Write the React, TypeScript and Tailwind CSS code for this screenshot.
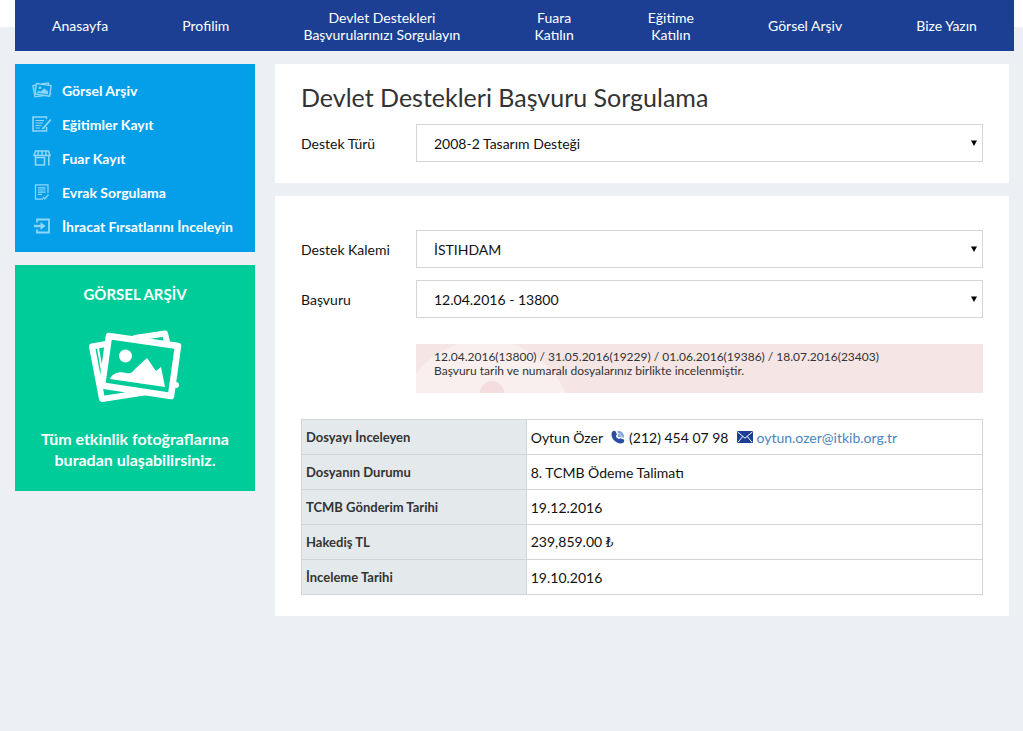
import type { ReactNode } from "react"

const navItems = [
  ["Anasayfa"],
  ["Profilim"],
  ["Devlet Destekleri", "Başvurularınızı Sorgulayın"],
  ["Fuara", "Katılın"],
  ["Eğitime", "Katılın"],
  ["Görsel Arşiv"],
  ["Bize Yazın"],
]

function PhotosIcon({ className }: { className: string }) {
  return (
    <svg viewBox="0 0 94 73" className={className} fill="none" aria-hidden="true">
      {/* back photo */}
      <path
        d="M18 14 L4 16.500 L14 69 L56 62.500 M47 8 L77 3.500 L79 12"
        stroke="currentColor"
        strokeWidth="6"
        strokeLinejoin="round"
        strokeLinecap="round"
      />
      <path d="M10 18 L16 53" stroke="currentColor" strokeWidth="2" />
      <circle cx="88" cy="55" r="3" fill="currentColor" />
      {/* front photo */}
      <path d="M21 6 L90 16 L83 66 L14 55.500 Z" stroke="currentColor" strokeWidth="6.500" strokeLinejoin="round" />
      <circle cx="37.500" cy="26" r="6.500" fill="currentColor" />
      <path
        d="M22 49 C24 43 32 41 38 43 C42 44 44 43 47 39 L59 28 L68 41 L73 37 L77 57 Z"
        fill="currentColor"
      />
    </svg>
  )
}

function FormIcon() {
  return (
    <svg viewBox="0 0 20 16" className="w-5 h-4" fill="none" stroke="currentColor" strokeWidth="1.6" aria-hidden="true">
      <path d="M14.500 3 V1 H1 V15 H14.500 V11" />
      <path d="M3.500 4.500 H12 M3.500 7 H11 M3.500 9.500 H9.500 M3.500 12 H8" strokeWidth="1.2" />
      <path d="M18.800 3.500 L11.500 12 L10 12.800" strokeWidth="1.8" />
    </svg>
  )
}

function StoreIcon() {
  return (
    <svg viewBox="0 0 18 16" className="w-5 h-4" fill="none" stroke="currentColor" strokeWidth="1.6" aria-hidden="true">
      <path d="M2.500 1 H15.500 L17 5.500 H1 Z M5.500 1 L4.800 5.500 M9 1 V5.500 M12.500 1 L13.200 5.500" strokeWidth="1.5" />
      <path d="M2.500 6 V15 H11.500 V7.500 H2.500 M15.800 6 V15.500" />
    </svg>
  )
}

function DocIcon() {
  return (
    <svg viewBox="0 0 20 16" className="w-5 h-4" fill="none" stroke="currentColor" strokeWidth="1.2" aria-hidden="true">
      <path d="M16 9 V0.800 H3.500 V15.200 H11" />
      <path d="M6 3.800 H13.500 M6 6 H13.500 M6 8.200 H13.500 M6 10.400 H10" />
      <path d="M11 13 L12.800 15 L16.500 10.500" />
    </svg>
  )
}

function EnterIcon() {
  return (
    <svg viewBox="0 0 20 16" className="w-5 h-4" fill="none" stroke="currentColor" strokeWidth="1.8" aria-hidden="true">
      <path d="M5 4.500 V1.500 H17 V14.500 H5 V11.500" />
      <path d="M2 8 H9" strokeWidth="2.4" />
      <path d="M8.500 4 L13.500 8 L8.500 12 Z" fill="currentColor" stroke="none" />
    </svg>
  )
}

function PhoneIcon() {
  return (
    <svg viewBox="0 0 14 14" className="w-3.5 h-3.5 shrink-0" aria-hidden="true">
      <path
        d="M1.500 1.500 C2.500 0.500 4.200 0.600 5 2 L5.800 4.400 C5.900 5.200 5.200 5.500 5 6.200 C5.500 7.500 6.500 8.500 8 9 C8.800 8.800 9.200 8.200 10 8.400 L12.700 9.600 C13.600 10.300 13.400 11.800 12.300 12.700 C9.500 14.500 5.500 13 3 10.300 C0.500 7.500 -0.300 3.500 1.500 1.500 Z"
        fill="#2b4fa0"
      />
      <path d="M6.500 0.800 C10.500 0.500 13.300 3.500 13 7.500 L7 7 Z" fill="#86a3d8" />
      <path d="M7 3.500 C9 3.500 10.400 5 10.400 7" stroke="#dfe7f5" fill="none" />
    </svg>
  )
}

function MailIcon() {
  return (
    <svg viewBox="0 0 16 12" className="w-4 h-3 shrink-0" aria-hidden="true">
      <rect width="16" height="12" fill="#1c3f94" />
      <path d="M0.500 0.800 L8 7.200 L15.500 0.800 M0.800 11.500 L5.700 5.500 M15.200 11.500 L10.300 5.500" stroke="#fff" fill="none" />
    </svg>
  )
}

const menuItems = [
  { label: "Görsel Arşiv", icon: <PhotosIcon className="w-5 h-4" /> },
  { label: "Eğitimler Kayıt", icon: <FormIcon /> },
  { label: "Fuar Kayıt", icon: <StoreIcon /> },
  { label: "Evrak Sorgulama", icon: <DocIcon /> },
  { label: "İhracat Fırsatlarını İnceleyin", icon: <EnterIcon /> },
]

function SelectRow({ id, label, value }: { id: string; label: string; value: string }) {
  return (
    <div className="flex items-center">
      <label htmlFor={id} className="w-[115px] shrink-0">
        {label}
      </label>
      <div className="relative flex-1">
        <select
          id={id}
          className="block w-full h-[38px] px-[17px] bg-white border border-[#d3d6d9] appearance-none rounded-none"
        >
          <option>{value}</option>
        </select>
        <svg viewBox="0 0 6 6" className="absolute right-1.5 top-4 w-1.5 h-1.5 pointer-events-none" aria-hidden="true">
          <path d="M0 0.500 H6 L3 6 Z" fill="#000" />
        </svg>
      </div>
    </div>
  )
}

function DetailRow({ title, children }: { title: string; children: ReactNode }) {
  return (
    <tr className="h-[35px]">
      <th scope="row" className="w-[33%] px-1 text-left text-[13px] font-bold text-[#333] bg-[#e4e9ec] border border-[#d0d5d8]">
        {title}
      </th>
      <td className="px-1 border border-[#d0d5d8]">{children}</td>
    </tr>
  )
}

export default function App() {
  return (
    <div className="min-h-screen bg-[#ecf0f4] font-['Lato',sans-serif] text-sm leading-[17px] text-[#111]">

      {/* Navigation */}
      <header className="bg-linear-to-b from-white from-[27px] to-[#ecf0f4] to-[27px] pl-[15px] pr-[9px]">
        <nav className="h-[51px] bg-[#1c3f94] text-white text-center flex items-center justify-around">
          {navItems.map((lines) => (
            <a key={lines.join(" ")} href="#">
              {lines.map((line) => (
                <span key={line} className="block">{line}</span>
              ))}
            </a>
          ))}
        </nav>
      </header>

      <div className="flex items-start gap-5 pl-[15px] pr-3.5 pt-[13px]">

        {/* Sidebar */}
        <aside className="w-60 shrink-0 flex flex-col gap-[13px] text-white">
          <ul className="bg-[#049fe8] py-[9px] px-[17px]">
            {menuItems.map((item) => (
              <li key={item.label}>
                <a href="#" className="flex items-center gap-2.5 h-[34px] font-bold whitespace-nowrap">
                  <span className="text-[#8fd6f8]">{item.icon}</span>
                  {item.label}
                </a>
              </li>
            ))}
          </ul>

          <a href="#" className="bg-[#00cc99] h-[226px] pt-[19px] flex flex-col items-center text-center font-bold text-base leading-[21px]">
            <span className="text-[15px]">GÖRSEL ARŞİV</span>
            <PhotosIcon className="w-[94px] h-[73px] my-[25px]" />
            <span className="px-5">Tüm etkinlik fotoğraflarına buradan ulaşabilirsiniz.</span>
          </a>
        </aside>

        {/* Content */}
        <main className="flex-1 min-w-0 flex flex-col gap-[13px]">
          <section className="bg-white px-[26px] pt-[17px] pb-[21px]">
            <h1 className="text-[25px] leading-8 mb-[11px] text-[#333]">Devlet Destekleri Başvuru Sorgulama</h1>
            <SelectRow id="tur" label="Destek Türü" value="2008-2 Tasarım Desteği" />
          </section>

          <section className="bg-white px-[26px] pt-[34px] pb-[21px]">
            <div className="flex flex-col gap-3">
              <SelectRow id="kalem" label="Destek Kalemi" value="İSTIHDAM" />
              <SelectRow id="basvuru" label="Başvuru" value="12.04.2016 - 13800" />
            </div>

            <div className="relative overflow-hidden ml-[115px] my-[26px] h-[49px] px-[18px] pt-1.5 bg-[#f6e5e5] text-xs leading-[14px] text-[#333]">
              <svg viewBox="0 0 160 49" className="absolute left-0 top-0 w-40 h-[49px]" aria-hidden="true">
                <circle cx="69" cy="84" r="88" fill="#faefef" />
                <circle cx="76" cy="49" r="12" fill="#f5dddd" />
              </svg>
              <p className="relative">12.04.2016(13800) / 31.05.2016(19229) / 01.06.2016(19386) / 18.07.2016(23403)</p>
              <p className="relative">Başvuru tarih ve numaralı dosyalarınız birlikte incelenmiştir.</p>
            </div>

            <table className="w-full border-collapse">
              <tbody>
                <DetailRow title="Dosyayı İnceleyen">
                  <div className="flex items-center">
                    <span className="mr-2">Oytun Özer</span>
                    <PhoneIcon />
                    <span className="ml-1 mr-2">(212) 454 07 98</span>
                    <MailIcon />
                    <a href="mailto:oytun.ozer@itkib.org.tr" className="ml-1 text-[#4a86bd]">oytun.ozer@itkib.org.tr</a>
                  </div>
                </DetailRow>
                <DetailRow title="Dosyanın Durumu">8. TCMB Ödeme Talimatı</DetailRow>
                <DetailRow title="TCMB Gönderim Tarihi">19.12.2016</DetailRow>
                <DetailRow title="Hakediş TL">
                  239,859.00 <span className="font-['DejaVu_Serif',serif] text-xs">₺</span>
                </DetailRow>
                <DetailRow title="İnceleme Tarihi">19.10.2016</DetailRow>
              </tbody>
            </table>
          </section>
        </main>

      </div>
    </div>
  )
}
